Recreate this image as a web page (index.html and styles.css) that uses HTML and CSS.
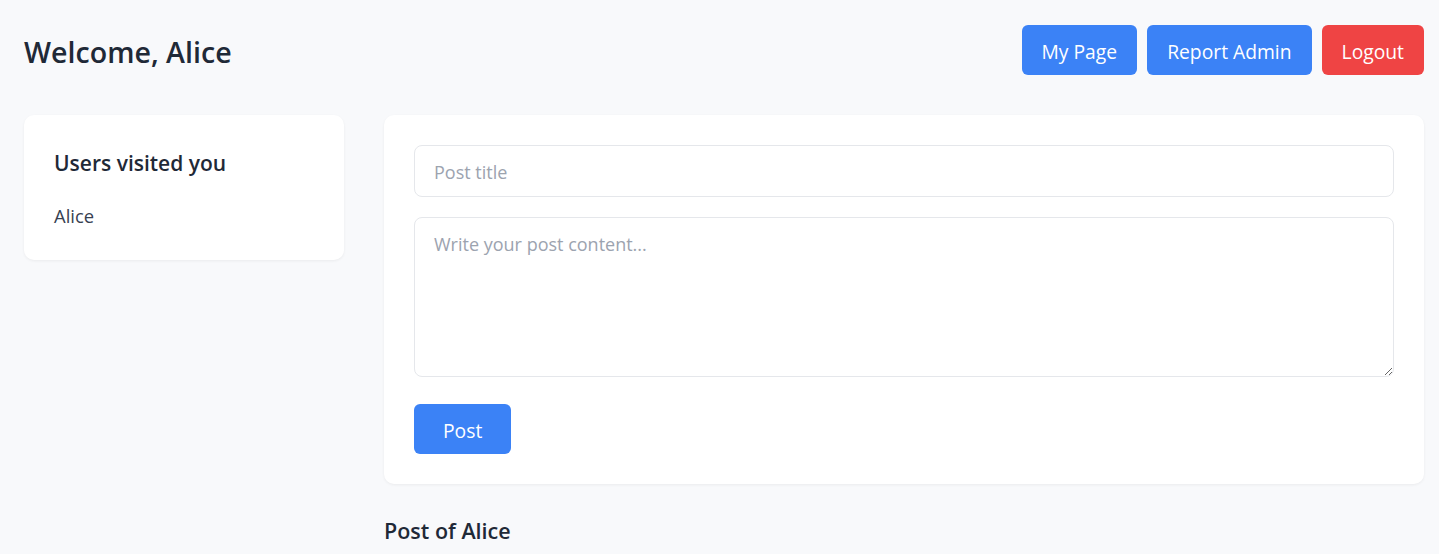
FILE: index.html
```html
<!DOCTYPE html>
<html lang="en">
<head>
<meta charset="utf-8">
<title>Welcome</title>
<link rel="stylesheet" href="styles.css">
</head>
<body>
<div class="page">
  <header class="topbar">
    <h1 class="title">Welcome, Alice</h1>
    <nav class="actions">
      <button class="btn btn-blue">My Page</button>
      <button class="btn btn-blue">Report Admin</button>
      <button class="btn btn-red">Logout</button>
    </nav>
  </header>
  <main class="layout">
    <aside class="card side">
      <h2 class="side-title">Users visited you</h2>
      <div class="visitor">Alice</div>
    </aside>
    <section class="content">
      <div class="card composer">
        <input class="field" type="text" placeholder="Post title">
        <textarea class="field area" placeholder="Write your post content..."></textarea>
        <button class="btn btn-blue post-btn">Post</button>
      </div>
      <h2 class="posts-title">Post of Alice</h2>
    </section>
  </main>
</div>
</body>
</html>
```

FILE: styles.css
```css
* { box-sizing: border-box; }
html, body { margin: 0; padding: 0; }
body {
  background: #f8f9fb;
  font-family: "Open Sans", "Noto Sans", sans-serif;
  color: #1f2937;
  overflow: hidden;
}
.page {
  padding: 25px 15px 0 24px;
}
.topbar {
  display: flex;
  align-items: center;
  justify-content: space-between;
  height: 50px;
}
.title {
  margin: 2px 0 0;
  font-size: 28.6px;
  font-weight: 600;
  color: #1f2937;
}
.actions {
  display: flex;
  gap: 10px;
}
.btn {
  font-family: inherit;
  font-size: 19.3px;
  line-height: 26px;
  height: 50px;
  padding: 3px 20px 0;
  border: none;
  border-radius: 6px;
  color: #fff;
  cursor: pointer;
}
.btn-blue { background: #3b82f6; }
.btn-red { background: #ef4444; }
.layout {
  display: flex;
  gap: 40px;
  margin-top: 40px;
  align-items: flex-start;
}
.card {
  background: #fff;
  border-radius: 10px;
  box-shadow: 0 1px 3px rgba(0, 0, 0, 0.06);
  padding: 30px;
}
.side {
  width: 320px;
  flex: none;
}
.side-title {
  margin: 0 0 21px;
  font-size: 21px;
  line-height: 36px;
  font-weight: 600;
  color: #1f2937;
}
.visitor {
  font-size: 18.4px;
  line-height: 28px;
  color: #374151;
}
.content {
  flex: 1;
}
.composer {
  display: flex;
  flex-direction: column;
  gap: 20px;
}
.field {
  font-family: inherit;
  font-size: 18px;
  color: #1f2937;
  border: 1px solid #e5e7eb;
  border-radius: 8px;
  padding: 2px 19px 0;
  height: 52px;
  outline: none;
  background: #fff;
}
.field::placeholder { color: #9ca3af; }
.area {
  height: 160px;
  padding: 13px 19px 12px;
  resize: vertical;
  line-height: 26px;
}
.post-btn {
  align-self: flex-start;
  margin-top: 7px;
  padding: 3px 29px 0;
}
.posts-title {
  margin: 32px 0 0;
  font-size: 21.5px;
  line-height: 30px;
  font-weight: 600;
  color: #1f2937;
}
```
